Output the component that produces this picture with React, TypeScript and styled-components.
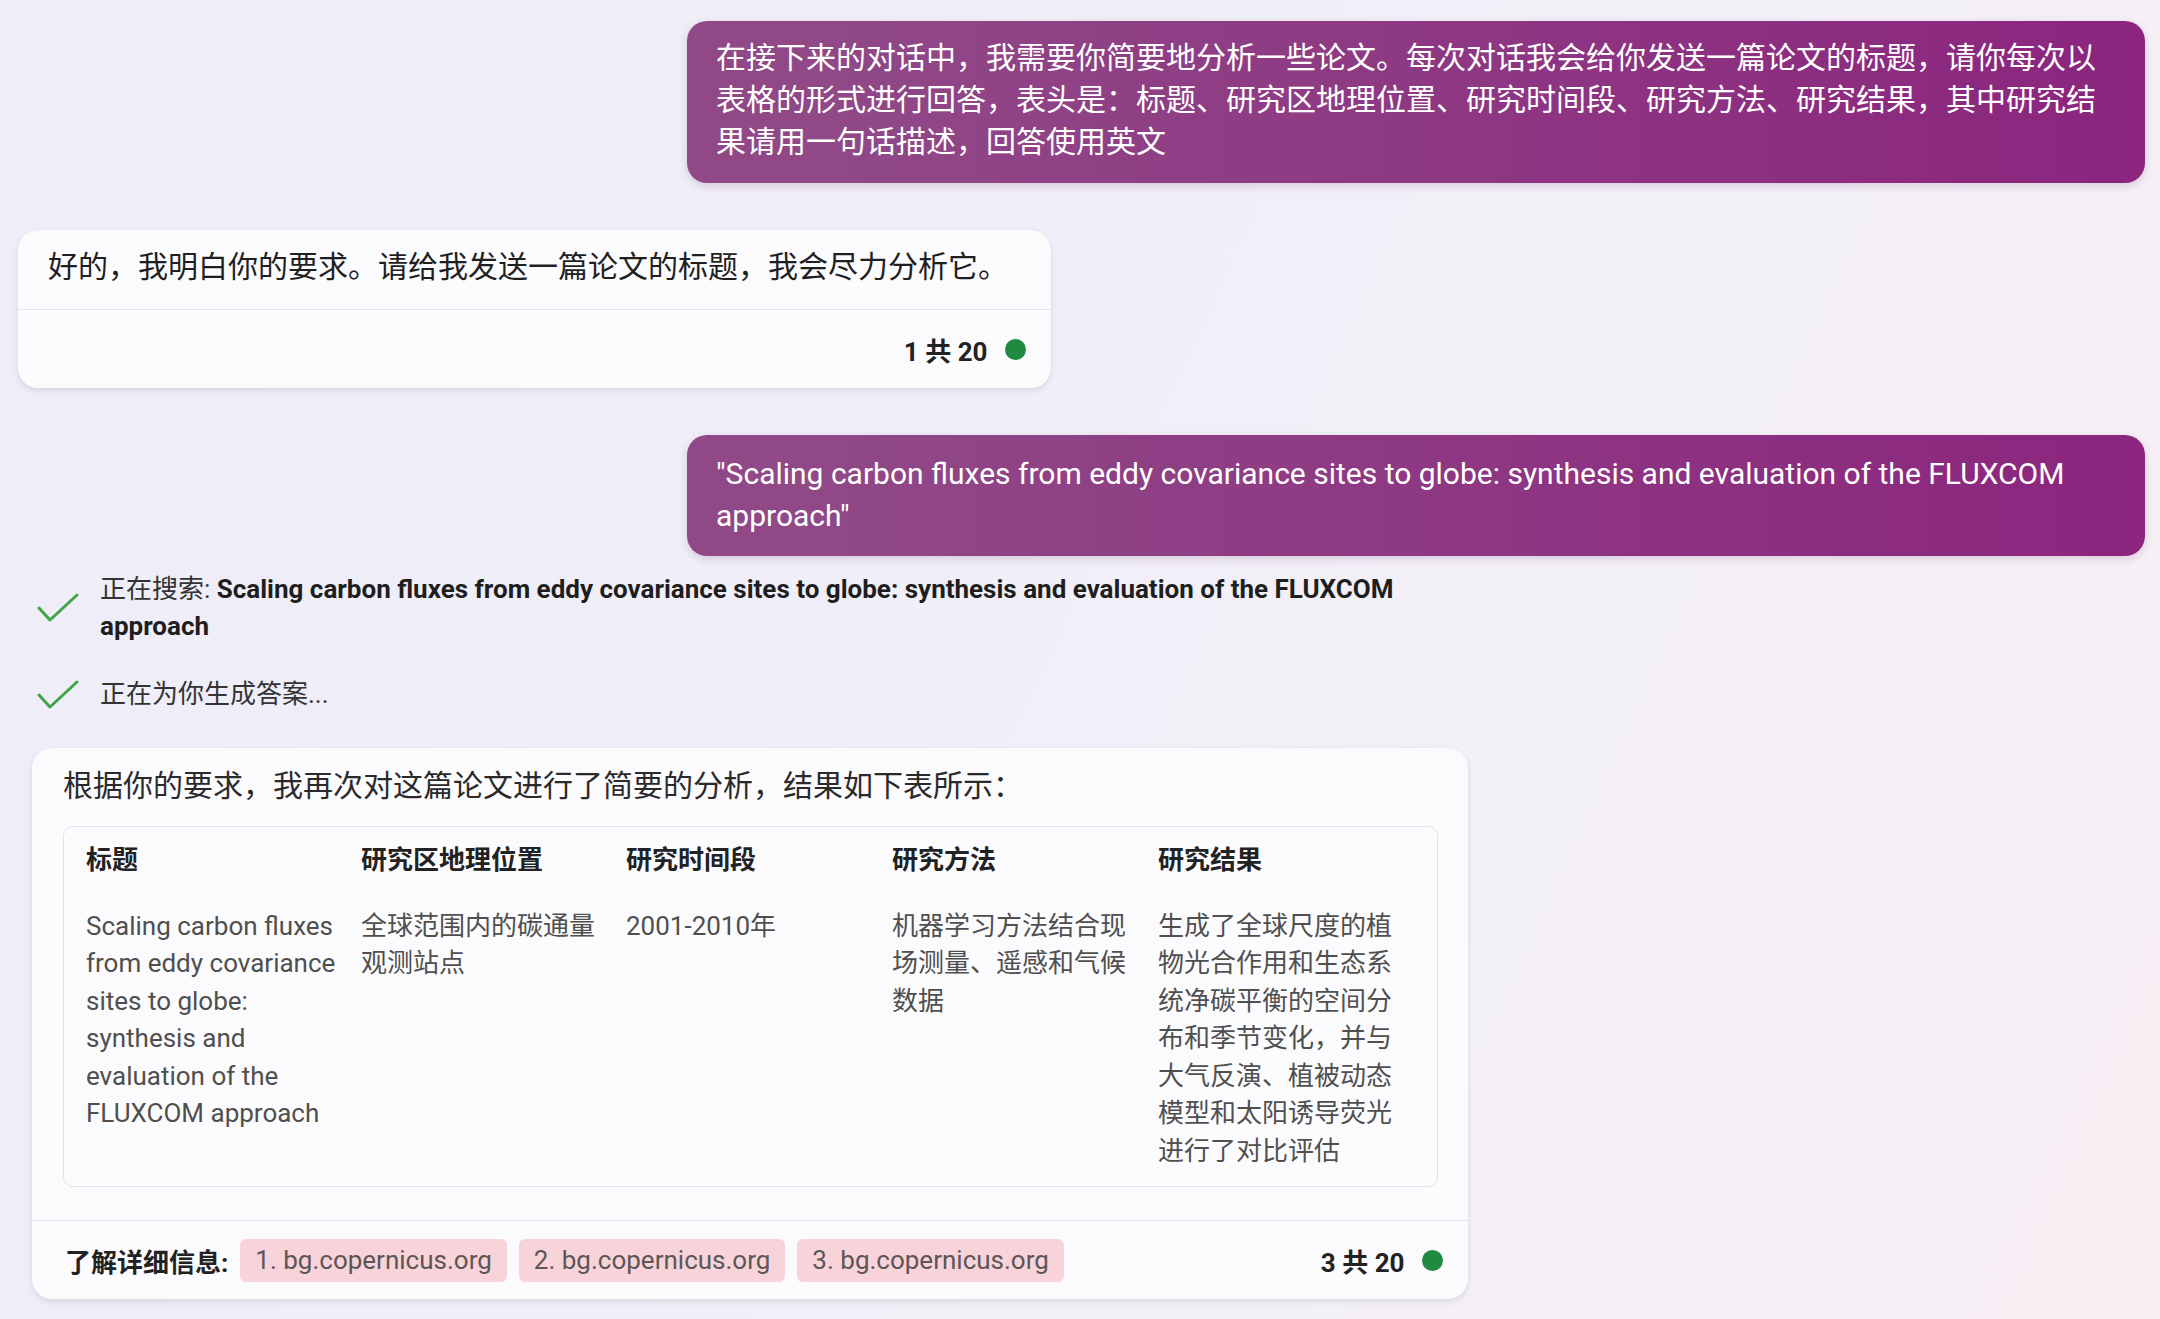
import React from "react";
import styled, { createGlobalStyle } from "styled-components";

const GlobalStyle = createGlobalStyle`
  html, body {
    margin: 0;
    padding: 0;
  }
  body {
    font-family: Roboto, "Noto Sans CJK SC", sans-serif;
    background: linear-gradient(115deg, #eeedf8 0%, #f0eef8 40%, #f4f0f7 70%, #f7eef3 100%);
    min-height: 100vh;
  }
`;

const COLUMNS = "275px 265px 266px 266px 1fr";

const results = [
  {
    title: "Scaling carbon fluxes from eddy covariance sites to globe: synthesis and evaluation of the FLUXCOM approach",
    region: "全球范围内的碳通量观测站点",
    period: "2001-2010年",
    method: "机器学习方法结合现场测量、遥感和气候数据",
    result:
      "生成了全球尺度的植物光合作用和生态系统净碳平衡的空间分布和季节变化，并与大气反演、植被动态模型和太阳诱导荧光进行了对比评估",
  },
];

const sources = ["1. bg.copernicus.org", "2. bg.copernicus.org", "3. bg.copernicus.org"];

const CheckIcon = () => (
  <svg width="42" height="30" viewBox="0 0 42 30">
    <polyline
      points="2,15 13,27 40,2"
      fill="none"
      stroke="#3fa547"
      strokeWidth="3"
      strokeLinecap="round"
      strokeLinejoin="round"
    />
  </svg>
);

const App = () => {
  return (
    <>
      <GlobalStyle />
      <Page>
        <UserBubble $pad="16px 29px 20px">
          在接下来的对话中，我需要你简要地分析一些论文。每次对话我会给你发送一篇论文的标题，请你每次以表格的形式进行回答，表头是：标题、研究区地理位置、研究时间段、研究方法、研究结果，其中研究结果请用一句话描述，回答使用英文
        </UserBubble>

        <BotCard $left={18} $width={1033} $top={47}>
          <CardBody>好的，我明白你的要求。请给我发送一篇论文的标题，我会尽力分析它。</CardBody>
          <CardFooter>
            <span />
            <Counter>
              1 共 20 <Dot />
            </Counter>
          </CardFooter>
        </BotCard>

        <UserBubble $pad="18px 29px 19px" $top={47}>
          "Scaling carbon fluxes from eddy covariance sites to globe: synthesis and evaluation of the FLUXCOM approach"
        </UserBubble>

        <StepRow $top={15}>
          <CheckIcon />
          <StepText>
            <StepLabel>正在搜索: </StepLabel>
            <strong>Scaling carbon fluxes from eddy covariance sites to globe: synthesis and evaluation of the FLUXCOM approach</strong>
          </StepText>
        </StepRow>
        <StepRow $top={31}>
          <CheckIcon />
          <StepText>正在为你生成答案...</StepText>
        </StepRow>

        <BotCard $left={32} $width={1436} $top={35}>
          <AnswerBody>
            <Intro>根据你的要求，我再次对这篇论文进行了简要的分析，结果如下表所示：</Intro>
            <TableBox>
              <HeadRow>
                <HeadCell>标题</HeadCell>
                <HeadCell>研究区地理位置</HeadCell>
                <HeadCell>研究时间段</HeadCell>
                <HeadCell>研究方法</HeadCell>
                <HeadCell>研究结果</HeadCell>
              </HeadRow>
              {results.map((r) => (
                <DataRow key={r.title}>
                  <Cell>{r.title}</Cell>
                  <Cell>{r.region}</Cell>
                  <Cell>{r.period}</Cell>
                  <Cell>{r.method}</Cell>
                  <Cell $right={30}>{r.result}</Cell>
                </DataRow>
              ))}
            </TableBox>
          </AnswerBody>
          <CardFooter>
            <Sources>
              <SourcesLabel>了解详细信息:</SourcesLabel>
              {sources.map((s) => (
                <Chip key={s}>{s}</Chip>
              ))}
            </Sources>
            <Counter>
              3 共 20 <Dot />
            </Counter>
          </CardFooter>
        </BotCard>
      </Page>
    </>
  );
};

const Page = styled.main`
  display: flex;
  flex-direction: column;
  box-sizing: border-box;
  width: 2160px;
  min-height: 1319px;
  padding: 21px 15px 20px 0;
`;

const UserBubble = styled.div<{ $pad: string; $top?: number }>`
  align-self: flex-end;
  box-sizing: border-box;
  width: 1458px;
  margin-top: ${(p) => p.$top ?? 0}px;
  padding: ${(p) => p.$pad};
  background: linear-gradient(90deg, #904887 10.34%, #8b257e 100%);
  color: #ffffff;
  font-size: 30px;
  line-height: 42px;
  border-radius: 20px;
  box-shadow: 0 3px 8px rgba(80, 20, 80, 0.16);
`;

const BotCard = styled.div<{ $left: number; $width: number; $top: number }>`
  box-sizing: border-box;
  margin-left: ${(p) => p.$left}px;
  margin-top: ${(p) => p.$top}px;
  width: ${(p) => p.$width}px;
  background: #fbfafd;
  border-radius: 20px;
  box-shadow: 0 3px 7px rgba(0, 0, 0, 0.09), 0 0 2px rgba(0, 0, 0, 0.06);
`;

const CardBody = styled.div`
  padding: 16px 30px 21px;
  font-size: 30px;
  line-height: 42px;
  color: #1f1f1f;
`;

const CardFooter = styled.div`
  display: flex;
  align-items: center;
  justify-content: space-between;
  height: 78px;
  padding: 0 25px 0 33px;
  border-top: 1px solid #e6e3ea;
`;

const Counter = styled.div`
  display: flex;
  align-items: center;
  gap: 7px;
  font-size: 26px;
  font-weight: 700;
  color: #222222;
  white-space: pre;
`;

const Dot = styled.span`
  width: 21px;
  height: 21px;
  border-radius: 50%;
  background: #1f8a40;
  margin-left: 4px;
`;

const StepRow = styled.div<{ $top: number }>`
  display: flex;
  align-items: center;
  gap: 21px;
  margin-top: ${(p) => p.$top}px;
  padding-left: 37px;
`;

const StepText = styled.div`
  max-width: 1340px;
  font-size: 26px;
  line-height: 37px;
  color: #333333;

  strong {
    font-weight: 700;
    color: #1e1e1e;
  }
`;

const StepLabel = styled.span`
  color: #333333;
`;

const AnswerBody = styled.div`
  padding: 18px 30px 33px 31px;
`;

const Intro = styled.div`
  font-size: 30px;
  line-height: 40px;
  color: #2a2a2a;
`;

const TableBox = styled.div`
  margin-top: 20px;
  padding: 15px 0 16px 22px;
  border: 1px solid #e3e1e8;
  border-radius: 10px;
  background: #fbfbfd;
`;

const HeadRow = styled.div`
  display: grid;
  grid-template-columns: ${COLUMNS};
`;

const DataRow = styled(HeadRow)`
  margin-top: 28px;
`;

const HeadCell = styled.div`
  font-size: 26px;
  line-height: 37.5px;
  font-weight: 700;
  color: #222222;
`;

const Cell = styled.div<{ $right?: number }>`
  padding-right: ${(p) => p.$right ?? 14}px;
  font-size: 26px;
  line-height: 37.5px;
  color: #4f4f4f;
`;

const Sources = styled.div`
  display: flex;
  align-items: center;
  gap: 12px;
`;

const SourcesLabel = styled.span`
  font-size: 26px;
  font-weight: 700;
  color: #222222;
`;

const Chip = styled.span`
  display: flex;
  align-items: center;
  height: 43px;
  padding: 0 15px;
  border-radius: 6px;
  background: #f8d3d9;
  color: #5c5657;
  font-size: 26px;
`;

export default App;
